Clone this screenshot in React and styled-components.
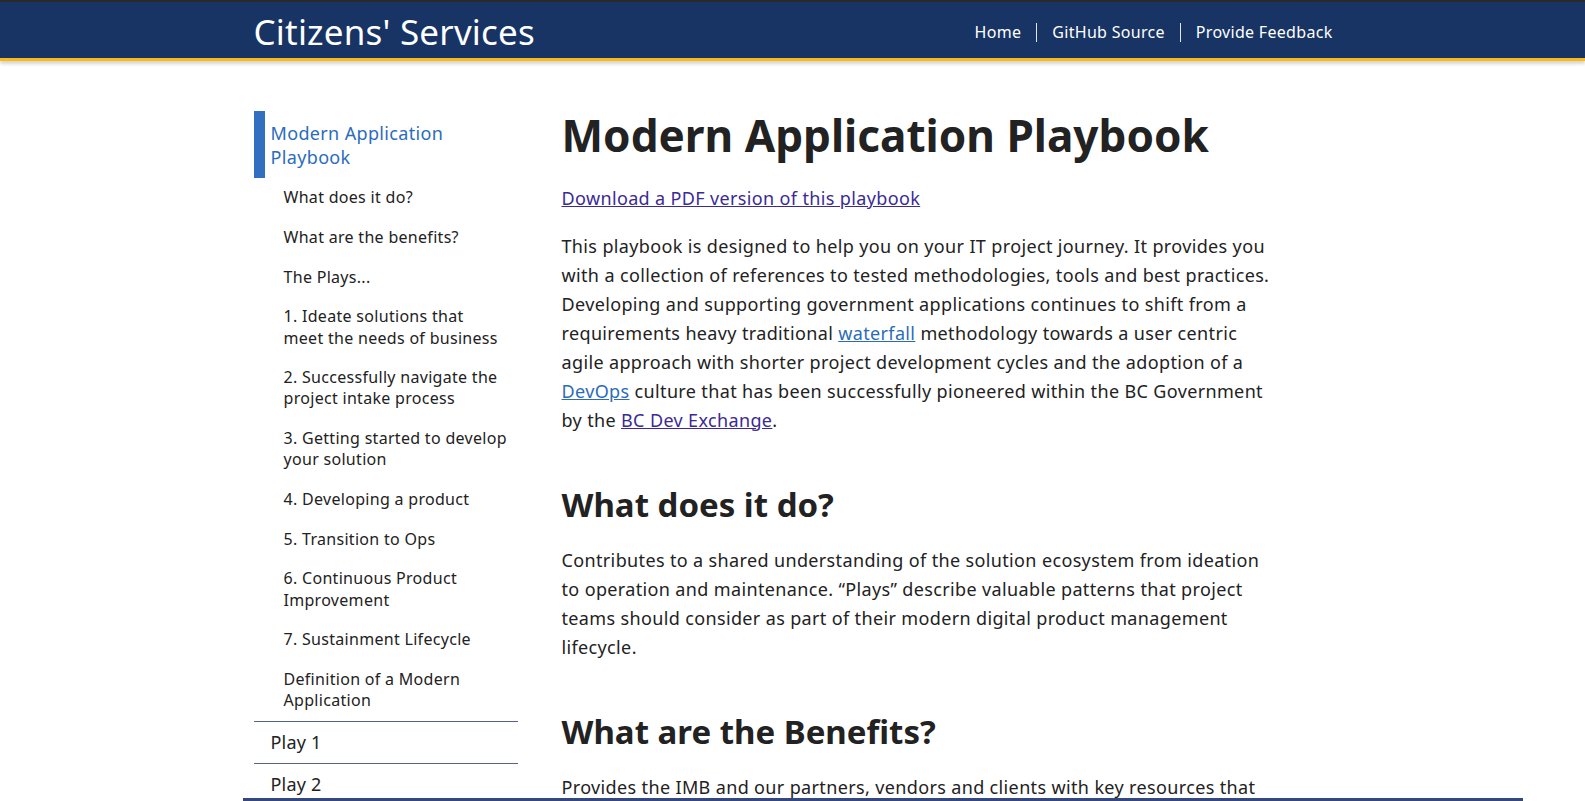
import React from 'react';
import styled, { createGlobalStyle } from 'styled-components';

const GlobalStyle = createGlobalStyle`
  html, body {
    margin: 0;
    padding: 0;
    background: #fff;
  }
  body {
    font-family: "Noto Sans", "Open Sans", sans-serif;
    color: #222;
  }
`;

const sideLinks = [
  'What does it do?',
  'What are the benefits?',
  'The Plays...',
  '1. Ideate solutions that meet\u00a0the needs of business',
  '2. Successfully navigate the project intake process',
  '3. Getting started to develop your solution',
  '4. Developing a product',
  '5. Transition to Ops',
  '6. Continuous Product Improvement',
  '7. Sustainment Lifecycle',
  'Definition of a Modern Application',
];

const plays = ['Play 1', 'Play 2', 'Play 3', 'Play 4'];

const App = () => {
  return (
    <>
      <GlobalStyle />
      <Header>
        <HeaderInner>
          <Title>Citizens' Services</Title>
          <Nav>
            <NavLink href="#">Home</NavLink>
            <Sep />
            <NavLink href="#">GitHub Source</NavLink>
            <Sep />
            <NavLink href="#">Provide Feedback</NavLink>
          </Nav>
        </HeaderInner>
      </Header>

      <Layout>
        <Sidebar>
          <ActiveItem href="#">Modern Application Playbook</ActiveItem>
          <SubList>
            {sideLinks.map((s) => (
              <SubItem key={s} href="#">{s}</SubItem>
            ))}
          </SubList>
          {plays.map((p) => (
            <PlayItem key={p} href="#">{p}</PlayItem>
          ))}
        </Sidebar>

        <Main>
          <H1>Modern Application Playbook</H1>
          <Lead>
            <Link href="#" $visited>Download a PDF version of this playbook</Link>
          </Lead>
          <Para>
            This playbook is designed to help you on your IT project journey. It provides you
            with a collection of references to tested methodologies, tools and best practices.
            Developing and supporting government applications continues to shift from a
            requirements heavy traditional <Link href="#">waterfall</Link> methodology towards a user centric
            agile approach with shorter project development cycles and the adoption of a{' '}
            <Link href="#">DevOps</Link> culture that has been successfully pioneered within the BC Government
            by the <Link href="#" $visited>BC Dev Exchange</Link>.
          </Para>

          <H2>What does it do?</H2>
          <Para>
            Contributes to a shared understanding of the solution ecosystem from ideation
            to operation and maintenance. “Plays” describe valuable patterns that project
            teams should consider as part of their modern digital product management
            lifecycle.
          </Para>

          <H2>What are the Benefits?</H2>
          <Para>
            Provides the IMB and our partners, vendors and clients with key resources that
            support the delivery of modern applications, and a common language for teams to
            plan, build and run digital services.
          </Para>
        </Main>
      </Layout>

      <BottomBar />
    </>
  );
};

export default App;

const Header = styled.header`
  background: #173464;
  border-top: 2px solid #2a2a2a;
  border-bottom: 3px solid #fcba19;
  box-shadow: 0 3px 3px rgba(0, 0, 0, 0.16);
`;

const HeaderInner = styled.div`
  max-width: 1080px;
  height: 56px;
  margin: 0 auto;
  display: flex;
  align-items: center;
  justify-content: space-between;
`;

const Title = styled.div`
  color: #fff;
  font-size: 35px;
  letter-spacing: 0.2px;
  line-height: 1;
  margin-left: 1px;
  margin-top: 2px;
`;

const Nav = styled.nav`
  display: flex;
  align-items: center;
  margin-top: 4px;
`;

const NavLink = styled.a`
  color: #fff;
  font-size: 16px;
  letter-spacing: 0.3px;
  text-decoration: none;
`;

const Sep = styled.span`
  width: 1px;
  height: 19px;
  background: #e6e6e6;
  margin: 0 15px;
`;

const Layout = styled.div`
  max-width: 1080px;
  margin: 0 auto;
  padding-top: 50px;
  display: flex;
  gap: 44px;
`;

const Sidebar = styled.aside`
  width: 264px;
  flex-shrink: 0;
  margin-left: 1px;
  display: flex;
  flex-direction: column;
`;

const ActiveItem = styled.a`
  display: block;
  border-left: 11px solid #3170c0;
  padding: 9.5px 0 9.5px 6px;
  font-size: 18px;
  letter-spacing: 0.35px;
  line-height: 24px;
  color: #2b6cbc;
  text-decoration: none;
`;

const SubList = styled.div`
  display: flex;
  flex-direction: column;
  border-bottom: 1px solid #5a6080;
`;

const SubItem = styled.a`
  display: block;
  padding: 9.25px 8px 9.25px 30px;
  font-size: 16px;
  letter-spacing: 0.3px;
  line-height: 21.2px;
  color: #222;
  text-decoration: none;
`;

const PlayItem = styled.a`
  display: block;
  padding: 8.5px 0 8.5px 17px;
  font-size: 18px;
  letter-spacing: 0.2px;
  line-height: 24px;
  color: #222;
  text-decoration: none;
  border-bottom: 1px solid #5a6080;
`;

const Main = styled.main`
  width: 720px;
  padding-bottom: 80px;
`;

const H1 = styled.h1`
  margin: 0 0 24px;
  font-size: 44.1px;
  line-height: 49px;
  font-weight: 700;
  color: #222;
`;

const H2 = styled.h2`
  margin: 51px 0 22px;
  font-size: 33px;
  line-height: 38px;
  font-weight: 700;
  color: #222;
`;

const Lead = styled.p`
  margin: 0 0 19px;
  font-size: 18px;
  letter-spacing: 0.36px;
  line-height: 28.8px;
`;

const Para = styled.p`
  margin: 0;
  font-size: 18px;
  letter-spacing: 0.36px;
  line-height: 29px;
  color: #222;
`;

const Link = styled.a`
  color: ${(p) => (p.$visited ? '#3b2a96' : '#2b6cb8')};
  text-decoration: underline;
`;

const BottomBar = styled.div`
  position: fixed;
  left: 243px;
  bottom: 0;
  width: 1280px;
  height: 3px;
  background: #34487c;
`;
